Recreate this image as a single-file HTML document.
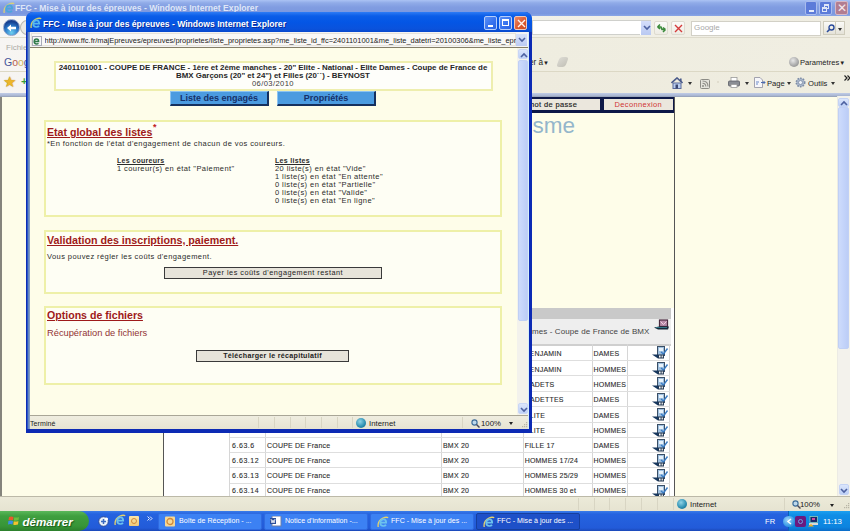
<!DOCTYPE html>
<html><head><meta charset="utf-8">
<style>
*{margin:0;padding:0;box-sizing:border-box}
html,body{width:850px;height:531px;overflow:hidden;background:#fefde9;font-family:"Liberation Sans",sans-serif;color:#222}
.a{position:absolute}
.nw{white-space:nowrap}
#bgtitle{left:0;top:0;width:850px;height:16px;background:linear-gradient(#abc3f4 0,#90abe8 18%,#809ce1 45%,#7b98df 85%,#8aa6e6 100%)}
#bgaddr{left:0;top:16px;width:850px;height:21px;background:linear-gradient(90deg,#f8f7f5,#f3f2ea 50%,#efede2)}
#bgmenu{left:0;top:37px;width:850px;height:34px;background:linear-gradient(90deg,#f7f5f3 0,#f3f1e8 30%,#efede0 62%,#f0eee2 100%);border-top:1px solid #dedbcc}
#bgfav{left:0;top:71px;width:850px;height:26px;background:linear-gradient(rgba(255,255,255,0) 84%,#bfcbe6 84.5%,#a6b3cf 96%,#8e98ab 100%),linear-gradient(90deg,#f6f4f2 0,#f2f0e6 30%,#eeebde 62%,#efede0 100%);border-top:1px solid #dcd8c5}
#bgcontent{left:0;top:97px;width:850px;height:400px;background:#fefde9}
#bgstatus{left:0;top:496px;width:850px;height:15px;background:linear-gradient(#ecead9,#e6e3d1);border-top:1px solid #bcb9a8}
#taskbar{left:0;top:511px;width:850px;height:20px;background:linear-gradient(#3a7ce9,#2563e0 15%,#225bd9 85%,#1b48b8)}
#start{left:0;top:511px;width:89px;height:20px;background:linear-gradient(#5bb85b,#3f9f3f 25%,#379537 75%,#2c7f2c);border-radius:0 10px 10px 0}
#tray{left:788px;top:511px;width:62px;height:20px;background:linear-gradient(#1da0f0,#0f8ee6 20%,#0c84df 80%,#0a6cc8);border-left:1px solid #0b5fb8}
.tb{top:513px;height:17px;width:104px;border-radius:2px;background:#3c81f3;border:1px solid #2f6ae0;color:#fff;font-size:7.1px;line-height:15px;padding-left:20px;white-space:nowrap;overflow:hidden}
.tb.act{background:#1e50c8;border-color:#163f9e}
#pop{left:26px;top:12px;width:506px;height:421px;background:#0c2ab4;border-radius:7px 7px 0 0}
#poptitle{left:26px;top:12px;width:506px;height:20px;background:linear-gradient(#2e7cf5,#0b5de8 20%,#0456e5 50%,#0a52dc 85%,#0848cc);border-radius:7px 7px 0 0}
.sep{width:1px;background:#d8d5c3}
.box{border:2px solid #eef0a8;background:#fefef4}
.h{color:#9e1a1a;font-weight:bold;text-decoration:underline;text-underline-offset:1px;font-size:10.6px;white-space:nowrap;line-height:12px}
.t{font-size:7.5px;letter-spacing:0.42px;color:#2b2b2b;white-space:nowrap;line-height:7.93px}
.btnb{background:#4b9be0;border-top:1px solid #8cc4f2;border-left:1px solid #8cc4f2;border-right:2px solid #15305e;border-bottom:2px solid #15305e;color:#15306a;font-weight:bold;font-size:9px;text-align:center;line-height:12px;white-space:nowrap}
.btng{background:#e7e4da;border:1px solid #3a3a3a;border-right-width:1.5px;border-bottom-width:1.5px;font-size:7.3px;letter-spacing:0.5px;text-align:center;line-height:10px;color:#222;white-space:nowrap}
.tr{font-size:7px;color:#2a2a2a;white-space:nowrap;letter-spacing:0.2px;line-height:10px;-webkit-text-stroke:0.1px #2a2a2a}
.hl{height:1px;background:#dedede}
.vl{width:1px;background:#d6d6d6}
</style></head><body>
<!-- ================= BACKGROUND WINDOW ================= -->
<div id="bgtitle" class="a"></div>
<svg class="a" style="left:3px;top:2px" width="12" height="12"><path d="M1.2 11 Q0.2 5 6 2 Q9.5 0.6 11.2 1.8" stroke="#d6cf7a" stroke-width="1.3" fill="none"/><path d="M3.6 6.6 H9.2 Q9.2 3.4 6.4 3.4 Q3.2 3.4 3.2 6.8 Q3.2 10 6.4 10 Q8.2 10 9 8.8" stroke="#4aa6dc" stroke-width="1.7" fill="none"/></svg>
<div class="a nw" style="left:15px;top:3px;font-size:8.6px;font-weight:bold;color:#dfe6f7;line-height:10px;letter-spacing:0px">FFC - Mise à jour des épreuves - Windows Internet Explorer</div>
<div class="a" style="left:805px;top:1px;width:12px;height:14px;background:#5c7bd9;border:1px solid #a9bcee;border-radius:2px"><div class="a" style="left:3px;top:8px;width:5px;height:2px;background:#e6ecfa"></div></div>
<div class="a" style="left:819px;top:1px;width:13px;height:14px;background:#5c7bd9;border:1px solid #a9bcee;border-radius:2px"><div class="a" style="left:4px;top:2px;width:5px;height:5px;border:1px solid #dfe6f7;border-top-width:2px"></div><div class="a" style="left:2px;top:5px;width:5px;height:5px;border:1px solid #dfe6f7;border-top-width:2px;background:#5c7bd9"></div></div>
<div class="a" style="left:835px;top:1px;width:13px;height:14px;background:#b27d91;border:1px solid #d6b8c6;border-radius:2px;color:#f5e8ee;font-size:12px;line-height:12px;text-align:center">✕</div>

<div id="bgaddr" class="a"></div>
<div class="a" style="left:20px;top:20px;width:14px;height:15px;border-radius:50%;background:#e9e8e4;border:1px solid #b9b8b0"></div>
<div class="a" style="left:3px;top:19px;width:17px;height:17px;border-radius:50%;background:radial-gradient(circle at 50% 85%,#6fd0f0,#2a78c9 45%,#153f8f 75%,#2b4d9a);border:1px solid #8aa0c8"></div>
<svg class="a" style="left:6px;top:23px" width="11" height="10"><path d="M1 5 L5 1.5 V3.8 H10 V6.2 H5 V8.5 Z" fill="#fff"/></svg>
<div class="a" style="left:532px;top:20px;width:119px;height:15px;background:#fff;border:1px solid #cfd0cc"></div>
<div class="a" style="left:640px;top:21px;width:11px;height:14px;background:linear-gradient(#d5defa,#b9c9f2);border-left:1px solid #fff"><svg class="a" style="left:2px;top:4px" width="8" height="6"><path d="M1 1 L4 4 L7 1" stroke="#4d61a0" stroke-width="1.6" fill="none"/></svg></div>
<div class="a" style="left:654px;top:21px;width:14px;height:14px;background:linear-gradient(#fbfbf8,#eeece4);border:1px solid #dedbd0;border-radius:2px"><svg class="a" style="left:1px;top:1px" width="11" height="11"><path d="M1.5 4 L4 1.5 M1.5 4 L4 6 M1.5 4 H5 L6 6" stroke="#3a8a3a" stroke-width="1.5" fill="none"/><path d="M9.5 6.5 L7 9 M9.5 6.5 L7 4.5 M9.5 6.5 H6 L5 4.5" stroke="#3a8a3a" stroke-width="1.5" fill="none"/></svg></div>
<div class="a" style="left:671px;top:21px;width:14px;height:14px;background:linear-gradient(#fbfbf8,#eeece4);border:1px solid #dedbd0;border-radius:2px"><svg class="a" style="left:2px;top:2px" width="9" height="9"><path d="M1 1 L8 8 M8 1 L1 8" stroke="#d43a3a" stroke-width="1.4"/></svg></div>
<div class="a" style="left:691px;top:21px;width:130px;height:15px;background:#fff;border:1px solid #d2d0c6"></div>
<div class="a nw" style="left:694px;top:23px;font-size:8px;color:#a8a8a8">Google</div>
<div class="a" style="left:823px;top:21px;width:13px;height:14px;background:linear-gradient(#fbfbf8,#e4e2d8);border:1px solid #cfccbc"><svg class="a" style="left:2px;top:2px" width="9" height="9"><circle cx="5.5" cy="3.5" r="2.5" stroke="#2a4b9a" stroke-width="1.4" fill="none"/><path d="M4 5 L1 8" stroke="#2a4b9a" stroke-width="1.6"/></svg></div>
<div class="a" style="left:836px;top:21px;width:9px;height:14px;background:linear-gradient(#fbfbf8,#e4e2d8);border:1px solid #cfccbc;border-left:none"><div class="a" style="left:2px;top:6px;border-left:2.5px solid transparent;border-right:2.5px solid transparent;border-top:3px solid #333"></div></div>

<div id="bgmenu" class="a"></div>
<div class="a nw" style="left:6px;top:43px;font-size:8px;color:#a9a9a4">Fichier</div>
<div class="a nw" style="left:4px;top:55.5px;font-size:10.5px;letter-spacing:0px;line-height:12px"><span style="color:#44549a">G</span><span style="color:#b86050">o</span><span style="color:#d0b860">o</span><span style="color:#44549a">g</span></div>
<div class="a nw" style="left:529px;top:57.5px;font-size:8.2px;color:#222">er à<span style="font-size:6px">▼</span></div>
<div class="a" style="left:558px;top:57px;width:9px;height:10px;background:linear-gradient(135deg,#d7d6d0,#b8b6ae);border-radius:3px;transform:skewX(-20deg);opacity:.8"></div>
<div class="a" style="left:789px;top:57px;width:10px;height:10px;border-radius:50%;background:radial-gradient(circle at 40% 35%,#e8e8e8,#9b9b9b 70%,#777)"></div>
<div class="a nw" style="left:800px;top:57.5px;font-size:7.6px;color:#222">Paramètres<span style="font-size:6px">▼</span></div>

<div id="bgfav" class="a"></div>
<div class="a nw" style="left:2.5px;top:74px;font-size:15px;color:#ecb62a;line-height:15px;text-shadow:0 0 1px #a07010">★</div>
<div class="a nw" style="left:21px;top:76px;font-size:11px;font-weight:bold;color:#3aa03a;line-height:11px">+</div>
<svg class="a" style="left:671px;top:76.5px" width="12" height="12"><path d="M0.5 6 L6 1 L11.5 6" stroke="#4a5a8a" stroke-width="1.6" fill="none"/><rect x="9" y="1.5" width="1.6" height="3" fill="#4a5a8a"/><rect x="2" y="6" width="8" height="5.5" fill="#b9cdf0" stroke="#5a6a9a"/><rect x="4.5" y="7.5" width="2.5" height="4" fill="#3a4670"/></svg>
<div class="a" style="left:688px;top:82px;border-left:2.5px solid transparent;border-right:2.5px solid transparent;border-top:3px solid #333"></div>
<svg class="a" style="left:699.5px;top:78.5px" width="10" height="10"><rect x="0.5" y="0.5" width="9" height="9" rx="1" fill="#e4e3dc" stroke="#8d8c86"/><circle cx="3" cy="7" r="1" fill="#8d8c86"/><path d="M2.5 4.2 Q5.8 4.2 5.8 7.5 M2.5 2 Q8 2 8 7.5" stroke="#8d8c86" stroke-width="1.1" fill="none"/></svg>
<div class="a" style="left:717px;top:81px;width:2px;height:2px;background:#dcd8c8;border-radius:50%"></div>
<svg class="a" style="left:728px;top:77px" width="12" height="11"><rect x="3" y="0.5" width="6" height="4" fill="#fff" stroke="#9a9a9a" stroke-width=".8"/><rect x="0.5" y="4" width="11" height="5" rx="1" fill="#8a8d94" stroke="#5a5d64" stroke-width=".8"/><rect x="3" y="7.5" width="6" height="3" fill="#fff" stroke="#9a9a9a" stroke-width=".8"/></svg>
<div class="a" style="left:745px;top:82px;border-left:2.5px solid transparent;border-right:2.5px solid transparent;border-top:3px solid #333"></div>
<svg class="a" style="left:753.5px;top:77px" width="12" height="11"><path d="M0.5 0.5 H6 L8.5 3 V10.5 H0.5 Z" fill="#f6f6fa" stroke="#9a9aa8" stroke-width=".9"/><path d="M2 5 H5 M2 7 H4" stroke="#6a8ac8" stroke-width="1"/><path d="M7 5.5 H11 M9.5 4 L11 5.5 L9.5 7" stroke="#4a6ab0" stroke-width="1" fill="none"/></svg>
<div class="a nw" style="left:767px;top:78.5px;font-size:7.6px;color:#222">Page</div>
<div class="a" style="left:787px;top:82px;border-left:2.5px solid transparent;border-right:2.5px solid transparent;border-top:3px solid #333"></div>
<svg class="a" style="left:795px;top:77px" width="11" height="11"><circle cx="5.5" cy="5.5" r="4.2" fill="#aab8cc" stroke="#7d8ca6" stroke-width="1.6" stroke-dasharray="1.6 1.1"/><circle cx="5.5" cy="5.5" r="2" fill="#eef2f8" stroke="#7d8ca6" stroke-width=".8"/></svg>
<div class="a nw" style="left:808px;top:78.5px;font-size:7.6px;color:#222">Outils</div>
<div class="a" style="left:831px;top:82px;border-left:2.5px solid transparent;border-right:2.5px solid transparent;border-top:3px solid #333"></div>
<svg class="a" style="left:843.5px;top:74.5px" width="7" height="6"><path d="M0.5 0.5 L3 3 L0.5 5.5 M3.5 0.5 L6 3 L3.5 5.5" stroke="#222" stroke-width="1.2" fill="none"/></svg>

<div id="bgcontent" class="a"></div>
<!-- background page -->
<div class="a" style="left:163px;top:97px;width:512px;height:399px;border-left:1.5px solid #555;border-right:1.2px solid #555"></div>
<div class="a" style="left:164px;top:97px;width:510px;height:16px;background:#0d1848"></div>
<div class="a" style="left:164px;top:99px;width:436px;height:11px;background:#ebe7dd"></div>
<div class="a nw" style="left:528px;top:100px;font-size:7.5px;letter-spacing:0.35px;color:#222;line-height:9px;-webkit-text-stroke:0.15px #222">mot de passe</div>
<div class="a" style="left:604px;top:99px;width:69px;height:11px;background:#ebe7dd"></div>
<div class="a nw" style="left:614.5px;top:100px;font-size:7.5px;letter-spacing:0.35px;color:#d03434;line-height:9px">Deconnexion</div>
<div class="a nw" style="left:532.5px;top:114.5px;font-size:22.5px;color:#94b6cb;line-height:22px">sme</div>
<div class="a" style="left:164px;top:308px;width:510px;height:188px;background:#fff"></div>
<div class="a" style="left:229px;top:308px;width:442px;height:11px;background:#c9c9c9"></div>
<div class="a" style="left:229px;top:319px;width:442px;height:25px;background:#eeeeee"></div>
<div class="a nw" style="left:532px;top:327px;font-size:8px;color:#444;letter-spacing:0.1px">mes - Coupe de France de BMX</div>
<div class="a" style="left:229px;top:344px;width:442px;height:2px;background:#cfcfcf"></div>
<svg class="a" style="left:654px;top:319px" width="16" height="13"><rect x="5.5" y="1" width="8" height="6.5" fill="#b88aa8" stroke="#4a2a40" stroke-width="1.2"/><path d="M6.5 2.5 L9.5 5.5 L12.5 2.5" stroke="#f0d0e0" stroke-width="1" fill="none"/><path d="M0 8.5 L5 7.5 H15 L14 10.5 H4 Z" fill="#16283a"/><path d="M2 8.5 H13" stroke="#3a8a9a" stroke-width=".8"/></svg>
<div class="a vl" style="left:229.2px;top:344px;height:152px"></div>
<div class="a vl" style="left:265.3px;top:344px;height:152px"></div>
<div class="a vl" style="left:441.3px;top:344px;height:152px"></div>
<div class="a vl" style="left:522.5px;top:344px;height:152px"></div>
<div class="a vl" style="left:591.8px;top:344px;height:152px"></div>
<div class="a vl" style="left:626.9px;top:344px;height:152px"></div>
<div class="a vl" style="left:668.8px;top:344px;height:152px"></div>
<div class="a hl" style="left:229.7px;top:359.8px;width:440px"></div>
<div class="a tr" style="left:232px;top:348.9px;letter-spacing:0.55px">6.63.1</div>
<div class="a tr" style="left:267px;top:348.9px">COUPE DE France</div>
<div class="a tr" style="left:443px;top:348.9px">BMX 20</div>
<div class="a tr" style="left:524.7px;top:348.9px">BENJAMIN</div>
<div class="a tr" style="left:593.5px;top:348.9px">DAMES</div>
<svg class="a" style="left:652px;top:346.0px" width="17" height="13"><rect x="5.5" y="0.5" width="7" height="9" fill="#9fc0e0" stroke="#3b4f66" stroke-width="1"/><rect x="7" y="2" width="4" height="3" fill="#e8f2fa"/><path d="M9 6 L11.5 8 L15.5 2.5" stroke="#3a7cc4" stroke-width="1.4" fill="none"/><path d="M0 8.5 L6 8.5 L6 12.5 Z" fill="#16375e"/><rect x="6" y="8.5" width="6" height="4" fill="#1f3550"/><rect x="7" y="9.5" width="1.6" height="2" fill="#fff"/><rect x="9.5" y="9.5" width="1.6" height="2" fill="#ddd"/></svg>
<div class="a hl" style="left:229.7px;top:375.4px;width:440px"></div>
<div class="a tr" style="left:232px;top:364.6px;letter-spacing:0.55px">6.63.2</div>
<div class="a tr" style="left:267px;top:364.6px">COUPE DE France</div>
<div class="a tr" style="left:443px;top:364.6px">BMX 20</div>
<div class="a tr" style="left:524.7px;top:364.6px">BENJAMIN</div>
<div class="a tr" style="left:593.5px;top:364.6px">HOMMES</div>
<svg class="a" style="left:652px;top:361.8px" width="17" height="13"><rect x="5.5" y="0.5" width="7" height="9" fill="#9fc0e0" stroke="#3b4f66" stroke-width="1"/><rect x="7" y="2" width="4" height="3" fill="#e8f2fa"/><path d="M9 6 L11.5 8 L15.5 2.5" stroke="#3a7cc4" stroke-width="1.4" fill="none"/><path d="M0 8.5 L6 8.5 L6 12.5 Z" fill="#16375e"/><rect x="6" y="8.5" width="6" height="4" fill="#1f3550"/><rect x="7" y="9.5" width="1.6" height="2" fill="#fff"/><rect x="9.5" y="9.5" width="1.6" height="2" fill="#ddd"/></svg>
<div class="a hl" style="left:229.7px;top:390.8px;width:440px"></div>
<div class="a tr" style="left:232px;top:380.1px;letter-spacing:0.55px">6.63.3</div>
<div class="a tr" style="left:267px;top:380.1px">COUPE DE France</div>
<div class="a tr" style="left:443px;top:380.1px">BMX 20</div>
<div class="a tr" style="left:524.7px;top:380.1px">CADETS</div>
<div class="a tr" style="left:593.5px;top:380.1px">HOMMES</div>
<svg class="a" style="left:652px;top:377.4px" width="17" height="13"><rect x="5.5" y="0.5" width="7" height="9" fill="#9fc0e0" stroke="#3b4f66" stroke-width="1"/><rect x="7" y="2" width="4" height="3" fill="#e8f2fa"/><path d="M9 6 L11.5 8 L15.5 2.5" stroke="#3a7cc4" stroke-width="1.4" fill="none"/><path d="M0 8.5 L6 8.5 L6 12.5 Z" fill="#16375e"/><rect x="6" y="8.5" width="6" height="4" fill="#1f3550"/><rect x="7" y="9.5" width="1.6" height="2" fill="#fff"/><rect x="9.5" y="9.5" width="1.6" height="2" fill="#ddd"/></svg>
<div class="a hl" style="left:229.7px;top:406.0px;width:440px"></div>
<div class="a tr" style="left:232px;top:395.4px;letter-spacing:0.55px">6.63.4</div>
<div class="a tr" style="left:267px;top:395.4px">COUPE DE France</div>
<div class="a tr" style="left:443px;top:395.4px">BMX 20</div>
<div class="a tr" style="left:524.7px;top:395.4px">CADETTES</div>
<div class="a tr" style="left:593.5px;top:395.4px">DAMES</div>
<svg class="a" style="left:652px;top:392.8px" width="17" height="13"><rect x="5.5" y="0.5" width="7" height="9" fill="#9fc0e0" stroke="#3b4f66" stroke-width="1"/><rect x="7" y="2" width="4" height="3" fill="#e8f2fa"/><path d="M9 6 L11.5 8 L15.5 2.5" stroke="#3a7cc4" stroke-width="1.4" fill="none"/><path d="M0 8.5 L6 8.5 L6 12.5 Z" fill="#16375e"/><rect x="6" y="8.5" width="6" height="4" fill="#1f3550"/><rect x="7" y="9.5" width="1.6" height="2" fill="#fff"/><rect x="9.5" y="9.5" width="1.6" height="2" fill="#ddd"/></svg>
<div class="a hl" style="left:229.7px;top:421.5px;width:440px"></div>
<div class="a tr" style="left:232px;top:410.8px;letter-spacing:0.55px">6.63.5</div>
<div class="a tr" style="left:267px;top:410.8px">COUPE DE France</div>
<div class="a tr" style="left:443px;top:410.8px">BMX 20</div>
<div class="a tr" style="left:524.7px;top:410.8px">ELITE</div>
<div class="a tr" style="left:593.5px;top:410.8px">DAMES</div>
<svg class="a" style="left:652px;top:408.0px" width="17" height="13"><rect x="5.5" y="0.5" width="7" height="9" fill="#9fc0e0" stroke="#3b4f66" stroke-width="1"/><rect x="7" y="2" width="4" height="3" fill="#e8f2fa"/><path d="M9 6 L11.5 8 L15.5 2.5" stroke="#3a7cc4" stroke-width="1.4" fill="none"/><path d="M0 8.5 L6 8.5 L6 12.5 Z" fill="#16375e"/><rect x="6" y="8.5" width="6" height="4" fill="#1f3550"/><rect x="7" y="9.5" width="1.6" height="2" fill="#fff"/><rect x="9.5" y="9.5" width="1.6" height="2" fill="#ddd"/></svg>
<div class="a hl" style="left:229.7px;top:436.9px;width:440px"></div>
<div class="a tr" style="left:232px;top:426.2px;letter-spacing:0.55px">6.63.5</div>
<div class="a tr" style="left:267px;top:426.2px">COUPE DE France</div>
<div class="a tr" style="left:443px;top:426.2px">BMX 20</div>
<div class="a tr" style="left:524.7px;top:426.2px">ELITE</div>
<div class="a tr" style="left:593.5px;top:426.2px">HOMMES</div>
<svg class="a" style="left:652px;top:423.5px" width="17" height="13"><rect x="5.5" y="0.5" width="7" height="9" fill="#9fc0e0" stroke="#3b4f66" stroke-width="1"/><rect x="7" y="2" width="4" height="3" fill="#e8f2fa"/><path d="M9 6 L11.5 8 L15.5 2.5" stroke="#3a7cc4" stroke-width="1.4" fill="none"/><path d="M0 8.5 L6 8.5 L6 12.5 Z" fill="#16375e"/><rect x="6" y="8.5" width="6" height="4" fill="#1f3550"/><rect x="7" y="9.5" width="1.6" height="2" fill="#fff"/><rect x="9.5" y="9.5" width="1.6" height="2" fill="#ddd"/></svg>
<div class="a hl" style="left:229.7px;top:452.1px;width:440px"></div>
<div class="a tr" style="left:232px;top:440.7px;letter-spacing:0.55px">6.63.6</div>
<div class="a tr" style="left:267px;top:440.7px">COUPE DE France</div>
<div class="a tr" style="left:443px;top:440.7px">BMX 20</div>
<div class="a tr" style="left:524.7px;top:440.7px">FILLE 17</div>
<div class="a tr" style="left:593.5px;top:440.7px">DAMES</div>
<svg class="a" style="left:652px;top:438.9px" width="17" height="13"><rect x="5.5" y="0.5" width="7" height="9" fill="#9fc0e0" stroke="#3b4f66" stroke-width="1"/><rect x="7" y="2" width="4" height="3" fill="#e8f2fa"/><path d="M9 6 L11.5 8 L15.5 2.5" stroke="#3a7cc4" stroke-width="1.4" fill="none"/><path d="M0 8.5 L6 8.5 L6 12.5 Z" fill="#16375e"/><rect x="6" y="8.5" width="6" height="4" fill="#1f3550"/><rect x="7" y="9.5" width="1.6" height="2" fill="#fff"/><rect x="9.5" y="9.5" width="1.6" height="2" fill="#ddd"/></svg>
<div class="a hl" style="left:229.7px;top:467.3px;width:440px"></div>
<div class="a tr" style="left:232px;top:455.9px;letter-spacing:0.55px">6.63.12</div>
<div class="a tr" style="left:267px;top:455.9px">COUPE DE France</div>
<div class="a tr" style="left:443px;top:455.9px">BMX 20</div>
<div class="a tr" style="left:524.7px;top:455.9px">HOMMES 17/24</div>
<div class="a tr" style="left:593.5px;top:455.9px">HOMMES</div>
<svg class="a" style="left:652px;top:454.1px" width="17" height="13"><rect x="5.5" y="0.5" width="7" height="9" fill="#9fc0e0" stroke="#3b4f66" stroke-width="1"/><rect x="7" y="2" width="4" height="3" fill="#e8f2fa"/><path d="M9 6 L11.5 8 L15.5 2.5" stroke="#3a7cc4" stroke-width="1.4" fill="none"/><path d="M0 8.5 L6 8.5 L6 12.5 Z" fill="#16375e"/><rect x="6" y="8.5" width="6" height="4" fill="#1f3550"/><rect x="7" y="9.5" width="1.6" height="2" fill="#fff"/><rect x="9.5" y="9.5" width="1.6" height="2" fill="#ddd"/></svg>
<div class="a hl" style="left:229.7px;top:482.5px;width:440px"></div>
<div class="a tr" style="left:232px;top:471.1px;letter-spacing:0.55px">6.63.13</div>
<div class="a tr" style="left:267px;top:471.1px">COUPE DE France</div>
<div class="a tr" style="left:443px;top:471.1px">BMX 20</div>
<div class="a tr" style="left:524.7px;top:471.1px">HOMMES 25/29</div>
<div class="a tr" style="left:593.5px;top:471.1px">HOMMES</div>
<svg class="a" style="left:652px;top:469.3px" width="17" height="13"><rect x="5.5" y="0.5" width="7" height="9" fill="#9fc0e0" stroke="#3b4f66" stroke-width="1"/><rect x="7" y="2" width="4" height="3" fill="#e8f2fa"/><path d="M9 6 L11.5 8 L15.5 2.5" stroke="#3a7cc4" stroke-width="1.4" fill="none"/><path d="M0 8.5 L6 8.5 L6 12.5 Z" fill="#16375e"/><rect x="6" y="8.5" width="6" height="4" fill="#1f3550"/><rect x="7" y="9.5" width="1.6" height="2" fill="#fff"/><rect x="9.5" y="9.5" width="1.6" height="2" fill="#ddd"/></svg>
<div class="a hl" style="left:229.7px;top:497.7px;width:440px"></div>
<div class="a tr" style="left:232px;top:486.3px;letter-spacing:0.55px">6.63.14</div>
<div class="a tr" style="left:267px;top:486.3px">COUPE DE France</div>
<div class="a tr" style="left:443px;top:486.3px">BMX 20</div>
<div class="a tr" style="left:524.7px;top:486.3px">HOMMES 30 et</div>
<div class="a tr" style="left:593.5px;top:486.3px">HOMMES</div>
<svg class="a" style="left:652px;top:484.5px" width="17" height="13"><rect x="5.5" y="0.5" width="7" height="9" fill="#9fc0e0" stroke="#3b4f66" stroke-width="1"/><rect x="7" y="2" width="4" height="3" fill="#e8f2fa"/><path d="M9 6 L11.5 8 L15.5 2.5" stroke="#3a7cc4" stroke-width="1.4" fill="none"/><path d="M0 8.5 L6 8.5 L6 12.5 Z" fill="#16375e"/><rect x="6" y="8.5" width="6" height="4" fill="#1f3550"/><rect x="7" y="9.5" width="1.6" height="2" fill="#fff"/><rect x="9.5" y="9.5" width="1.6" height="2" fill="#ddd"/></svg><div class="a" style="left:0;top:97px;width:2px;height:399px;background:#85847c"></div>
<!-- bg scrollbar -->
<div class="a" style="left:837px;top:96px;width:13px;height:400px;background:#f3f2ec;border-left:1px solid #ecebe4"></div>
<div class="a" style="left:838px;top:98px;width:11px;height:9px;background:linear-gradient(#dce6fb,#bdd0f7);border:1px solid #c4d3f5;border-radius:2px"><svg class="a" style="left:1px;top:1px" width="8" height="6"><path d="M1 5 L4 2 L7 5" stroke="#4d61a0" stroke-width="1.6" fill="none"/></svg></div>
<div class="a" style="left:838px;top:107px;width:11px;height:242px;background:linear-gradient(90deg,#cddbfb,#c4d4fa 50%,#bccdf6);border:1px solid #c0d0f5;border-radius:2px"></div>
<div class="a" style="left:838.5px;top:484px;width:10px;height:11px;background:linear-gradient(#dce6fb,#bdd0f7);border:1px solid #c4d3f5;border-radius:2px"><svg class="a" style="left:0.5px;top:2.5px" width="8" height="6"><path d="M1 1 L4 4 L7 1" stroke="#4d61a0" stroke-width="1.6" fill="none"/></svg></div>

<div id="bgstatus" class="a"></div>
<div class="a sep" style="left:578px;top:498px;height:12px"></div>
<div class="a sep" style="left:594px;top:498px;height:12px"></div>
<div class="a sep" style="left:609px;top:498px;height:12px"></div>
<div class="a sep" style="left:625px;top:498px;height:12px"></div>
<div class="a sep" style="left:641px;top:498px;height:12px"></div>
<div class="a sep" style="left:657px;top:498px;height:12px"></div>
<div class="a sep" style="left:673px;top:498px;height:12px"></div>
<div class="a" style="left:677px;top:499px;width:10px;height:10px;border-radius:50%;background:radial-gradient(circle at 40% 35%,#8fd3e6,#2a8db0 60%,#16607e)"></div>
<div class="a nw" style="left:690px;top:500px;font-size:7.8px;color:#222">Internet</div>
<div class="a sep" style="left:783.5px;top:498px;height:12px"></div>
<svg class="a" style="left:791.5px;top:499.5px" width="9" height="9"><circle cx="3.5" cy="3.5" r="2.6" fill="#bcd8ec" stroke="#3a6a98" stroke-width="1.1"/><path d="M5.5 5.5 L8.5 8.5" stroke="#4a4a5a" stroke-width="1.5"/></svg>
<div class="a nw" style="left:800px;top:500px;font-size:7.8px;color:#222">100%</div>
<div class="a" style="left:830px;top:504px;border-left:2.5px solid transparent;border-right:2.5px solid transparent;border-top:3px solid #222"></div>
<svg class="a" style="left:843px;top:503px" width="7" height="7"><g fill="#b8b5a6"><rect x="5" y="0" width="1.2" height="1.2"/><rect x="3" y="2" width="1.2" height="1.2"/><rect x="5" y="2" width="1.2" height="1.2"/><rect x="1" y="4" width="1.2" height="1.2"/><rect x="3" y="4" width="1.2" height="1.2"/><rect x="5" y="4" width="1.2" height="1.2"/></g></svg>
<!-- ================= TASKBAR ================= -->
<div id="taskbar" class="a"></div>
<div id="start" class="a"></div>
<svg class="a" style="left:8px;top:515px" width="12" height="11"><path d="M1 2 Q3 1 5.5 2 L5 5.3 Q3 4.5 0.5 5.3 Z" fill="#e8582c"/><path d="M6.3 2.2 Q8.5 3 11 2 L10.5 5.3 Q8 6 5.8 5.5 Z" fill="#6cbf3c"/><path d="M0.4 6 Q3 5.2 5 6 L4.5 9.5 Q2.5 8.7 0 9.5 Z" fill="#3a8ee8"/><path d="M5.7 6.2 Q8 7 10.4 6 L10 9.5 Q7.5 10.3 5.3 9.7 Z" fill="#f2c230"/></svg>
<div class="a nw" style="left:22.5px;top:514px;font-size:11.6px;font-weight:bold;font-style:italic;color:#fff;line-height:15px;text-shadow:1px 1px 1px #1c5a1c">démarrer</div>
<svg class="a" style="left:98px;top:515.5px" width="11" height="11"><circle cx="5.5" cy="5.5" r="4.8" fill="#eaf2fa" stroke="#2a4a9a" stroke-width="1"/><path d="M3 5.5 H8 M5.5 3 V8" stroke="#3a6ac0" stroke-width="1.5"/><circle cx="8.5" cy="3" r="1.6" fill="#fff"/></svg>
<svg class="a" style="left:114px;top:514px" width="12" height="12"><path d="M1.2 11 Q0.2 5 6 2 Q9.5 0.6 11.2 1.8" stroke="#e5d26a" stroke-width="1.3" fill="none"/><path d="M3.6 6.6 H9.2 Q9.2 3.4 6.4 3.4 Q3.2 3.4 3.2 6.8 Q3.2 10 6.4 10 Q8.2 10 9 8.8" stroke="#6cc2ee" stroke-width="1.7" fill="none"/></svg>
<div class="a" style="left:128.5px;top:515.5px;width:10.5px;height:10.5px;background:linear-gradient(#fbe6a8,#f0c878);border-radius:1px"><div class="a" style="left:2px;top:2px;width:6.5px;height:6.5px;border-radius:50%;border:1.3px solid #d08a3a"></div></div>
<svg class="a" style="left:147px;top:515.5px" width="6" height="5"><path d="M0.5 0.5 L2.5 2.5 L0.5 4.5 M3 0.5 L5 2.5 L3 4.5" stroke="#e8eeff" stroke-width="1" fill="none"/></svg>
<div id="tray" class="a"></div>
<div class="a nw" style="left:765px;top:516.5px;font-size:7.6px;color:#fff;line-height:10px">FR</div>
<div class="a" style="left:783px;top:515.5px;width:11.5px;height:11.5px;border-radius:50%;background:radial-gradient(circle at 40% 35%,#9fd6fa,#3a9ae6 60%,#1a6fc0)"><svg class="a" style="left:2.5px;top:2.5px" width="7" height="7"><path d="M5 1 L2 3.5 L5 6" stroke="#fff" stroke-width="1.5" fill="none"/></svg></div>
<div class="a" style="left:795px;top:516px;width:10.5px;height:10.5px;background:#6a1a80;border-radius:2px"><div class="a" style="left:2.5px;top:2.5px;width:5.5px;height:5.5px;border-radius:50%;border:1.5px solid #6fa0e0"></div></div>
<svg class="a" style="left:807.5px;top:515.5px" width="11" height="11"><rect x="2" y="0.5" width="7.5" height="6" fill="#1a2a6a" stroke="#8ad0c0" stroke-width=".8"/><rect x="4" y="2" width="3" height="2" fill="#d04aa0"/><rect x="1" y="7" width="9" height="2" fill="#d8d8d8"/><path d="M0 10.5 L3 8 L6 10.5 Z" fill="#f0b020"/></svg>
<div class="a nw" style="left:823px;top:516.5px;font-size:7.8px;color:#fff;line-height:10px">11:13</div>
<div class="a tb" style="left:158px"><svg class="a" style="left:6px;top:2px" width="10" height="11"><rect x="0" y="0.5" width="10" height="10" rx="1" fill="#f6d894"/><circle cx="5" cy="5.5" r="3" fill="none" stroke="#d08a3a" stroke-width="1.3"/></svg>Boîte de Réception - ...</div>
<div class="a tb" style="left:264px"><svg class="a" style="left:5px;top:2px" width="12" height="11"><rect x="2" y="0" width="9" height="10" fill="#fff" stroke="#6b7fa8"/><rect x="0" y="2" width="6" height="6" fill="#2c4f9a"/><path d="M1 3 L2 7 L3 4 L4 7 L5 3" stroke="#fff" stroke-width=".8" fill="none"/></svg>Notice d'information -...</div>
<div class="a tb" style="left:370px"><svg class="a" style="left:5.5px;top:1.5px" width="12" height="12"><path d="M1.2 11 Q0.2 5 6 2 Q9.5 0.6 11.2 1.8" stroke="#e5d26a" stroke-width="1.3" fill="none"/><path d="M3.6 6.6 H9.2 Q9.2 3.4 6.4 3.4 Q3.2 3.4 3.2 6.8 Q3.2 10 6.4 10 Q8.2 10 9 8.8" stroke="#6cc2ee" stroke-width="1.7" fill="none"/></svg>FFC - Mise à jour des ...</div>
<div class="a tb act" style="left:476px"><svg class="a" style="left:5.5px;top:1.5px" width="12" height="12"><path d="M1.2 11 Q0.2 5 6 2 Q9.5 0.6 11.2 1.8" stroke="#e5d26a" stroke-width="1.3" fill="none"/><path d="M3.6 6.6 H9.2 Q9.2 3.4 6.4 3.4 Q3.2 3.4 3.2 6.8 Q3.2 10 6.4 10 Q8.2 10 9 8.8" stroke="#6cc2ee" stroke-width="1.7" fill="none"/></svg>FFC - Mise à jour des ...</div>
<!-- ================= POPUP ================= -->
<div id="pop" class="a"></div>
<div id="poptitle" class="a"></div>
<svg class="a" style="left:30px;top:17px" width="12" height="12"><path d="M1.2 11 Q0.2 5 6 2 Q9.5 0.6 11.2 1.8" stroke="#d8d060" stroke-width="1.3" fill="none"/><path d="M3.6 6.6 H9.2 Q9.2 3.4 6.4 3.4 Q3.2 3.4 3.2 6.8 Q3.2 10 6.4 10 Q8.2 10 9 8.8" stroke="#58b8ee" stroke-width="1.7" fill="none"/></svg>
<div class="a nw" style="left:43px;top:18.5px;font-size:8.6px;font-weight:bold;color:#fff;line-height:10px;text-shadow:1px 1px 0 #0a2e9c">FFC - Mise à jour des épreuves - Windows Internet Explorer</div>
<div class="a" style="left:483.5px;top:16px;width:13.5px;height:14px;background:linear-gradient(135deg,#5a90f6,#3470ee 60%,#2a62e0);border:1px solid #b4cdfb;border-radius:2px"><div class="a" style="left:3px;top:8px;width:5px;height:2px;background:#fff"></div></div>
<div class="a" style="left:499px;top:16px;width:13px;height:14px;background:linear-gradient(135deg,#5a90f6,#3470ee 60%,#2a62e0);border:1px solid #b4cdfb;border-radius:2px"><div class="a" style="left:2px;top:2px;width:7px;height:7px;border:1px solid #fff;border-top-width:2px"></div></div>
<div class="a" style="left:514px;top:16px;width:13px;height:14px;background:linear-gradient(135deg,#ec8a68,#dc5a30 55%,#c84a22);border:1px solid #f0c8b8;border-radius:2px"><svg class="a" style="left:2px;top:2px" width="9" height="9"><path d="M1 1 L8 8 M8 1 L1 8" stroke="#fff4ee" stroke-width="1.4"/></svg></div>

<div class="a" style="left:30px;top:32px;width:498px;height:16px;background:#f4f3f3;border-bottom:1.3px solid #857f68"></div>
<div class="a" style="left:31px;top:33px;width:485px;height:13px;background:#f9f8f6;border:1px solid #e6e3da"></div>
<svg class="a" style="left:32px;top:35.5px" width="10" height="10"><rect x="0.5" y="0.5" width="9" height="9" fill="#f6f6f8" stroke="#a8aab8"/><path d="M2.6 5.4 H6.6 Q6.6 3 4.6 3 Q2.2 3 2.2 5.6 Q2.2 8 4.6 8 Q5.8 8 6.4 7.2" stroke="#2f7a4a" stroke-width="1.5" fill="none"/></svg>
<div class="a nw" style="left:44.5px;top:35.8px;width:471px;overflow:hidden;font-size:7.45px;color:#222;line-height:9px">http://www.ffc.fr/majEpreuves/epreuves/proprietes/liste_proprietes.asp?me_liste_id_ffc=2401101001&amp;me_liste_datetri=20100306&amp;me_liste_epr</div>
<div class="a" style="left:516px;top:34px;width:11px;height:12px;background:linear-gradient(#d8e2fb,#bccbf3)"><svg class="a" style="left:2px;top:3px" width="8" height="6"><path d="M1 1 L4 4 L7 1" stroke="#4d61a0" stroke-width="1.6" fill="none"/></svg></div>

<div class="a" style="left:30px;top:48px;width:498px;height:367px;background:#fefde9"></div>
<div class="a" style="left:27px;top:32px;width:1px;height:397px;background:#2c58c8"></div>
<div class="a" style="left:28px;top:32px;width:2px;height:397px;background:linear-gradient(90deg,#5a7cc0,#8aa4c4)"></div>
<div class="a" style="left:527.5px;top:32px;width:1.5px;height:397px;background:#d6eef8"></div>
<!-- popup scrollbar -->
<div class="a" style="left:517px;top:48px;width:11px;height:367px;background:#f3f2ec"></div>
<div class="a" style="left:518px;top:49px;width:10px;height:10px;background:linear-gradient(#dce6fb,#bdd0f7);border:1px solid #c9d7f6;border-radius:2px"><svg class="a" style="left:0.5px;top:1.5px" width="8" height="6"><path d="M1 5 L4 2 L7 5" stroke="#4d61a0" stroke-width="1.6" fill="none"/></svg></div>
<div class="a" style="left:518px;top:60px;width:10px;height:261px;background:linear-gradient(90deg,#cddbfb,#c4d4fa 50%,#bccdf6);border:1px solid #c0d0f5;border-radius:2px"></div>
<div class="a" style="left:518px;top:403px;width:10px;height:11px;background:linear-gradient(#dce6fb,#bdd0f7);border:1px solid #c9d7f6;border-radius:2px"><svg class="a" style="left:0.5px;top:2.5px" width="8" height="6"><path d="M1 1 L4 4 L7 1" stroke="#4d61a0" stroke-width="1.6" fill="none"/></svg></div>

<!-- popup status -->
<div class="a" style="left:30px;top:415px;width:498px;height:14px;background:linear-gradient(#efede0,#e6e3d2);border-top:1px solid #a9a697"></div>
<div class="a nw" style="left:30px;top:419px;font-size:7px;letter-spacing:0.1px;color:#222;line-height:9px">Terminé</div>
<div class="a sep" style="left:258px;top:417px;height:11px"></div>
<div class="a sep" style="left:274px;top:417px;height:11px"></div>
<div class="a sep" style="left:290px;top:417px;height:11px"></div>
<div class="a sep" style="left:305px;top:417px;height:11px"></div>
<div class="a sep" style="left:321px;top:417px;height:11px"></div>
<div class="a sep" style="left:337px;top:417px;height:11px"></div>
<div class="a sep" style="left:352px;top:417px;height:11px"></div>
<div class="a" style="left:356px;top:418px;width:10px;height:10px;border-radius:50%;background:radial-gradient(circle at 40% 35%,#8fd3e6,#2a8db0 60%,#16607e)"></div>
<div class="a nw" style="left:369px;top:419px;font-size:7.8px;color:#222;line-height:9px">Internet</div>
<div class="a sep" style="left:462px;top:417px;height:11px"></div>
<svg class="a" style="left:470.5px;top:419px" width="9" height="9"><circle cx="3.5" cy="3.5" r="2.6" fill="#bcd8ec" stroke="#3a6a98" stroke-width="1.1"/><path d="M5.5 5.5 L8.5 8.5" stroke="#4a4a5a" stroke-width="1.5"/></svg>
<div class="a nw" style="left:481px;top:419px;font-size:7.8px;color:#222;line-height:9px">100%</div>
<div class="a" style="left:509px;top:421.8px;border-left:2.5px solid transparent;border-right:2.5px solid transparent;border-top:3px solid #222"></div>
<svg class="a" style="left:521px;top:422px" width="7" height="7"><g fill="#b8b5a6"><rect x="5" y="0" width="1.2" height="1.2"/><rect x="3" y="2" width="1.2" height="1.2"/><rect x="5" y="2" width="1.2" height="1.2"/><rect x="1" y="4" width="1.2" height="1.2"/><rect x="3" y="4" width="1.2" height="1.2"/><rect x="5" y="4" width="1.2" height="1.2"/></g></svg>
<!-- popup content -->
<div class="a box" style="left:53.5px;top:60.5px;width:439px;height:30px;border:2.2px solid #eeeeae;background:#fefefa"></div>
<div class="a nw" style="left:53px;top:64.4px;width:440px;text-align:center;font-size:7.9px;font-weight:bold;line-height:8px;color:#262626">2401101001 - COUPE DE FRANCE - 1ère et 2ème manches - 20" Elite - National - Elite Dames - Coupe de France de<br>BMX Garçons (20" et 24") et Filles (20``) - BEYNOST<br><span style="font-weight:normal;color:#3a3a3a;font-size:7.6px;letter-spacing:0.4px">06/03/2010</span></div>
<div class="a btnb" style="left:170px;top:91px;width:99px;height:15px">Liste des engagés</div>
<div class="a btnb" style="left:277px;top:91px;width:99px;height:15px">Propriétés</div>

<div class="a box" style="left:44.3px;top:120.3px;width:458px;height:96.5px"></div>
<div class="a h" style="left:47px;top:126px">Etat global des listes</div>
<div class="a nw" style="left:153px;top:122px;font-size:9px;color:#c02020;font-weight:bold">*</div>
<div class="a t" style="left:47px;top:140px">*En fonction de l'état d'engagement de chacun de vos coureurs.</div>
<div class="a t" style="left:117px;top:157.4px"><b style="text-decoration:underline;font-size:7px;letter-spacing:0.3px">Les coureurs</b><br>1 coureur(s) en état "Paiement"</div>
<div class="a t" style="left:275px;top:157.4px"><b style="text-decoration:underline;font-size:7px;letter-spacing:0.3px">Les listes</b><br>20 liste(s) en état "Vide"<br>1 liste(s) en état "En attente"<br>0 liste(s) en état "Partielle"<br>0 liste(s) en état "Valide"<br>0 liste(s) en état "En ligne"</div>

<div class="a box" style="left:44.3px;top:229.8px;width:458px;height:64px"></div>
<div class="a h" style="left:47px;top:233.5px;font-size:10.7px">Validation des inscriptions, paiement.</div>
<div class="a t" style="left:47px;top:252.7px">Vous pouvez régler les coûts d'engagement.</div>
<div class="a btng" style="left:164px;top:267px;width:218px;height:12px">Payer les coûts d'engagement restant</div>

<div class="a box" style="left:44.3px;top:306.3px;width:458px;height:78.5px"></div>
<div class="a h" style="left:47px;top:309px">Options de fichiers</div>
<div class="a nw" style="left:47px;top:328px;font-size:9.3px;color:#923434">Récupération de fichiers</div>
<div class="a btng" style="left:196px;top:350px;width:153px;height:12px;font-weight:bold;font-size:7.1px;letter-spacing:0.3px">Télécharger le récapitulatif</div>
</body></html>
